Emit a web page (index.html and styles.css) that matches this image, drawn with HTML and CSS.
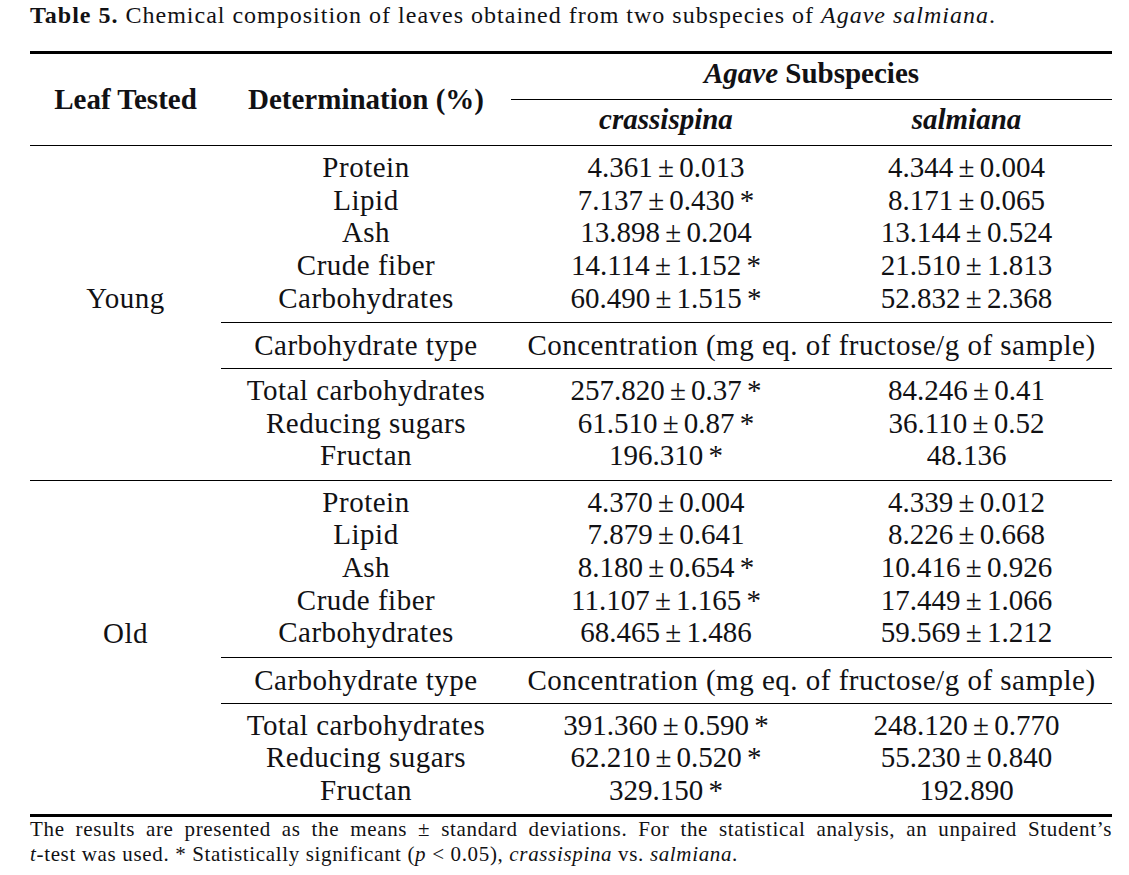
FILE: index.html
```html
<!DOCTYPE html>
<html lang="en">
<head>
<meta charset="utf-8">
<title>Table 5</title>
<link rel="stylesheet" href="styles.css">
</head>
<body>
<div class="page">
  <p class="caption"><b>Table 5.</b> Chemical composition of leaves obtained from two subspecies of <i>Agave salmiana</i>.</p>
  <div class="rule-thick top"></div>
  <table class="data">
    <colgroup><col class="c1"><col class="c2"><col class="c3"><col class="c4"></colgroup>
    <thead>
      <tr>
        <th rowspan="2" class="lt">Leaf Tested</th>
        <th rowspan="2" class="lt">Determination (%)</th>
        <th colspan="2" class="agave"><i>Agave</i> Subspecies</th>
      </tr>
      <tr>
        <th class="sub"><i>crassispina</i></th>
        <th class="sub"><i>salmiana</i></th>
      </tr>
    </thead>
    <tbody>
      <tr class="first"><td></td><td>Protein</td><td class="num">4.361 ± 0.013</td><td class="num">4.344 ± 0.004</td></tr>
      <tr><td></td><td>Lipid</td><td class="num">7.137 ± 0.430 *</td><td class="num">8.171 ± 0.065</td></tr>
      <tr><td></td><td>Ash</td><td class="num">13.898 ± 0.204</td><td class="num">13.144 ± 0.524</td></tr>
      <tr><td></td><td>Crude fiber</td><td class="num">14.114 ± 1.152 *</td><td class="num">21.510 ± 1.813</td></tr>
      <tr class="last"><td>Young</td><td>Carbohydrates</td><td class="num">60.490 ± 1.515 *</td><td class="num">52.832 ± 2.368</td></tr>
      <tr class="type"><td class="blank"></td><td>Carbohydrate type</td><td colspan="2">Concentration (mg eq. of fructose/g of sample)</td></tr>
      <tr class="first"><td></td><td>Total carbohydrates</td><td class="num">257.820 ± 0.37 *</td><td class="num">84.246 ± 0.41</td></tr>
      <tr><td></td><td>Reducing sugars</td><td class="num">61.510 ± 0.87 *</td><td class="num">36.110 ± 0.52</td></tr>
      <tr class="last"><td></td><td>Fructan</td><td class="num">196.310 *</td><td class="num">48.136</td></tr>
      <tr class="first grp"><td></td><td>Protein</td><td class="num">4.370 ± 0.004</td><td class="num">4.339 ± 0.012</td></tr>
      <tr><td></td><td>Lipid</td><td class="num">7.879 ± 0.641</td><td class="num">8.226 ± 0.668</td></tr>
      <tr><td></td><td>Ash</td><td class="num">8.180 ± 0.654 *</td><td class="num">10.416 ± 0.926</td></tr>
      <tr><td></td><td>Crude fiber</td><td class="num">11.107 ± 1.165 *</td><td class="num">17.449 ± 1.066</td></tr>
      <tr class="last"><td>Old</td><td>Carbohydrates</td><td class="num">68.465 ± 1.486</td><td class="num">59.569 ± 1.212</td></tr>
      <tr class="type"><td class="blank"></td><td>Carbohydrate type</td><td colspan="2">Concentration (mg eq. of fructose/g of sample)</td></tr>
      <tr class="first"><td></td><td>Total carbohydrates</td><td class="num">391.360 ± 0.590 *</td><td class="num">248.120 ± 0.770</td></tr>
      <tr><td></td><td>Reducing sugars</td><td class="num">62.210 ± 0.520 *</td><td class="num">55.230 ± 0.840</td></tr>
      <tr class="last"><td></td><td>Fructan</td><td class="num">329.150 *</td><td class="num">192.890</td></tr>
    </tbody>
  </table>
  <div class="rule-thick"></div>
  <div class="note">
    <div class="note-line justify">The results are presented as the means ± standard deviations. For the statistical analysis, an unpaired Student’s</div>
    <div class="note-line"><i>t</i>-test was used. * Statistically significant (<i>p</i> &lt; 0.05), <i>crassispina</i> vs. <i>salmiana</i>.</div>
  </div>
</div>
</body>
</html>
```

FILE: styles.css
```css
html, body {
  margin: 0;
  background: #ffffff;
}

body {
  font-family: "Liberation Serif", "Times New Roman", serif;
  color: #111114;
}

.page {
  width: 1082px;
  padding-left: 30px;
}

.caption {
  margin: 0;
  font-size: 24px;
  letter-spacing: 1px;
  line-height: 30px;
}

.rule-thick {
  height: 3px;
  background: #000;
}

.rule-thick.top {
  margin-top: 21px;
}

table.data {
  border-collapse: collapse;
  border-spacing: 0;
  table-layout: fixed;
  width: 1082px;
  font-size: 29px;
}

col.c1 { width: 191px; }
col.c2 { width: 290px; }
col.c3 { width: 310px; }
col.c4 { width: 291px; }

th, td {
  padding: 0;
  text-align: center;
  font-weight: normal;
  line-height: 32.7px;
  white-space: nowrap;
  letter-spacing: 0.5px;
}

thead th {
  font-weight: bold;
  letter-spacing: 0;
}

.lt {
  vertical-align: middle;
  border-bottom: 1px solid #000;
}

.agave,
.sub {
  line-height: 38px;
  padding-bottom: 7px;
  border-bottom: 1px solid #000;
}

td.num {
  letter-spacing: 0;
  word-spacing: -2px;
}

tr.first td {
  padding-top: 5px;
}

tr.last td {
  padding-bottom: 7.5px;
}

tr.grp td {
  border-top: 1px solid #000;
}

tr.type td {
  padding-top: 6px;
  padding-bottom: 6.3px;
  border-top: 1px solid #000;
  border-bottom: 1px solid #000;
}

tr.type td.blank {
  border-top: none;
  border-bottom: none;
}

.note {
  font-size: 21px;
  letter-spacing: 0.65px;
  line-height: 25px;
}

.note-line.justify {
  text-align: justify;
  text-align-last: justify;
}
```
